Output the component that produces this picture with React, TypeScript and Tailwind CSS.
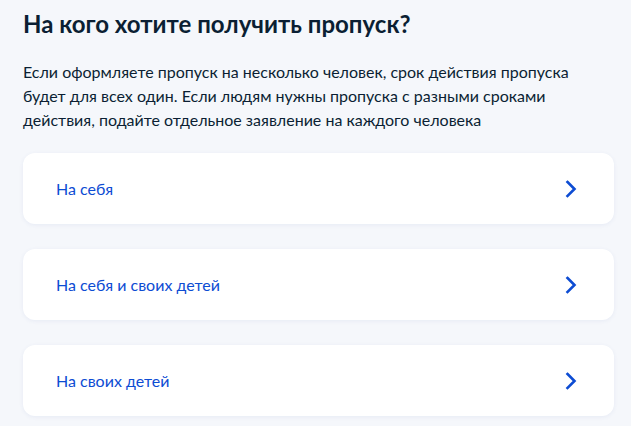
const options = ["На себя", "На себя и своих детей", "На своих детей"]

const Chevron = () => (
  <svg width="12" height="18" viewBox="0 0 12 18" fill="none">
    <path d="M2.5 2l7 7-7 7" stroke="#0d4cd3" strokeWidth="2.6" strokeLinecap="square" strokeLinejoin="miter" />
  </svg>
)

export default function App() {
  return (
    <div className="min-h-screen w-full bg-[#f5f7fb] pl-[23px] pr-[17px] pt-[8px] text-[#0b1f33] font-['Lato',sans-serif]">
      <h1 className="text-[24px] leading-[32px] font-bold">На кого хотите получить пропуск?</h1>
      <p className="mt-[20px] max-w-[560px] text-[16px] leading-[24px]">
        Если оформляете пропуск на несколько человек, срок действия пропуска будет для всех один. Если людям нужны пропуска с разными сроками действия, подайте отдельное заявление на каждого человека
      </p>
      <div className="mt-[21px] flex flex-col gap-[25px]">
        {options.map((o) => (
          <div
            key={o}
            className="flex h-[71px] items-center justify-between rounded-[12px] bg-white pl-[33px] pr-[37px] shadow-[0_1px_4px_rgba(60,90,160,0.08)]"
          >
            <span className="text-[16px] text-[#0d4cd3]">{o}</span>
            <Chevron />
          </div>
        ))}
      </div>
    </div>
  )
}
